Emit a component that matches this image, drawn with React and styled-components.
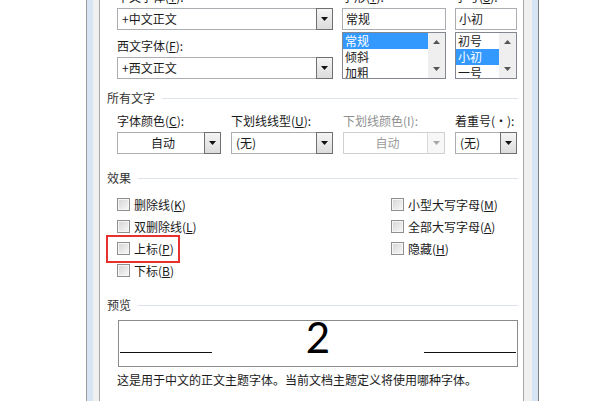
import React from "react";
import styled, { createGlobalStyle } from "styled-components";

const GlobalStyle = createGlobalStyle`
  html, body {
    margin: 0;
    padding: 0;
    background: #fff;
    overflow: hidden;
  }
  body {
    font-family: "Noto Sans CJK SC", "Noto Sans", sans-serif;
    font-size: 12px;
    color: #1a1a1a;
  }
`;

const Window = styled.div`
  margin-left: 86px;
  width: 453px;
  height: 401px;
  box-sizing: border-box;
  border-left: 1px solid #9c9c9c;
  border-right: 1px solid #7d7d7d;
  background: #d6e4f3;
  padding: 0 6px;
  display: flex;
`;

const Inner = styled.div`
  flex: 1;
  display: flex;
  background: #f0f0f0;
  padding: 0 8px 0 6px;
`;

const Panel = styled.div`
  flex: 1;
  background: #fff;
  border-left: 1px solid #a7a7a7;
  border-right: 1px solid #a7a7a7;
  padding: 0 5px 0 7px;
  overflow: hidden;
`;

const TopGrid = styled.div`
  display: grid;
  grid-template-columns: 216px 104px 62px;
  column-gap: 9px;
  margin: -11px 0 0 10px;
`;

const Column = styled.div`
  display: flex;
  flex-direction: column;
`;

const Label = styled.div`
  height: 16px;
  line-height: 16px;
  white-space: nowrap;
  margin-top: ${(p) => p.$top || 0}px;
  margin-bottom: 3px;
  color: ${(p) => (p.$disabled ? "#8f8f8f" : "#1a1a1a")};
`;

const Combo = styled.div`
  height: 22px;
  box-sizing: border-box;
  border: 1px solid ${(p) => (p.$disabled ? "#d0d0d0" : "#abadb3")};
  background: #fff;
  display: flex;
  align-items: stretch;
`;

const ComboText = styled.div`
  flex: 1;
  line-height: 20px;
  padding-left: 4px;
  text-align: ${(p) => (p.$center ? "center" : "left")};
  color: ${(p) => (p.$disabled ? "#9a9a9a" : "#1a1a1a")};
  white-space: nowrap;
`;

const DropButton = styled.div`
  width: 17px;
  margin: ${(p) => (p.$disabled ? "0" : "-1px -1px -1px 0")};
  box-sizing: border-box;
  border: ${(p) => (p.$disabled ? "none" : "1px solid #707070")};
  border-left: 1px solid ${(p) => (p.$disabled ? "#dadada" : "#707070")};
  background: ${(p) =>
    p.$disabled ? "#f7f7f7" : "linear-gradient(#f4f4f4, #dcdcdc)"};
  display: flex;
  align-items: center;
  justify-content: center;
`;

const TextBox = styled.div`
  height: 22px;
  box-sizing: border-box;
  border: 1px solid #abadb3;
  line-height: 20px;
  padding-left: 3px;
`;

const ListBox = styled.div`
  margin-top: 2px;
  height: 47px;
  box-sizing: border-box;
  border: 1px solid #828790;
  display: flex;
`;

const ListItems = styled.div`
  flex: 1;
  overflow: hidden;
`;

const ListItem = styled.div`
  height: 16px;
  line-height: 16px;
  padding-left: 2px;
  background: ${(p) => (p.$selected ? "#3399ff" : "transparent")};
  color: ${(p) => (p.$selected ? "#fff" : "#1a1a1a")};
  white-space: nowrap;
`;

const ScrollBar = styled.div`
  width: 17px;
  background: #efefef;
  display: flex;
  flex-direction: column;
  align-items: center;
  justify-content: space-between;
  padding: 7px 0 7px;
  box-sizing: border-box;
`;

const Heading = styled.div`
  display: flex;
  align-items: center;
  gap: 7px;
  height: 16px;
  line-height: 16px;
  color: #333;
  margin-top: ${(p) => p.$top}px;
  &::after {
    content: "";
    flex: 1;
    height: 1px;
    background: #dde4eb;
  }
`;

const FieldRow = styled.div`
  display: grid;
  grid-template-columns: 104px 102px 102px 62px;
  column-gap: 10px;
  margin: 7px 0 0 10px;
`;

const Effects = styled.div`
  display: grid;
  grid-template-columns: 274px 1fr;
  grid-template-rows: repeat(4, 22px);
  grid-auto-flow: column;
  margin: 7px 0 0 10px;
`;

const CheckRow = styled.div`
  position: relative;
  display: flex;
  align-items: center;
  gap: 4px;
  white-space: nowrap;
`;

const CheckBox = styled.span`
  width: 13px;
  height: 13px;
  box-sizing: border-box;
  border: 1px solid #8e8f8f;
  background: linear-gradient(135deg, #d4d4d4, #f9f9f9);
  box-shadow: inset 0 0 0 1px #f6f6f6;
`;

const Highlight = styled.div`
  position: absolute;
  left: -11px;
  top: -2px;
  width: 74px;
  height: 28px;
  box-sizing: border-box;
  border: 2px solid #e8302f;
`;

const Preview = styled.div`
  margin: 7px 0 0 11px;
  height: 47px;
  box-sizing: border-box;
  border: 1px solid #8c8c8c;
  display: flex;
  align-items: baseline;
  justify-content: space-between;
  padding: 0 1px;
`;

const PreviewLine = styled.div`
  width: 92px;
  height: 1px;
  background: #111;
`;

const Digit = styled.span`
  font-family: Lato, "Liberation Sans", sans-serif;
  font-size: 42px;
  line-height: 33.5px;
  color: #000;
`;

const Caption = styled.div`
  margin: 5px 0 0 10px;
  line-height: 16px;
  white-space: nowrap;
`;

const Arrow = ({ up, color = "#111" }) => (
  <svg width="7" height="4" viewBox="0 0 7 4">
    <polygon points={up ? "0,4 7,4 3.5,0" : "0,0 7,0 3.5,4"} fill={color} />
  </svg>
);

const Select = ({ text, center, disabled }) => (
  <Combo $disabled={disabled}>
    <ComboText $center={center} $disabled={disabled}>
      {text}
    </ComboText>
    <DropButton $disabled={disabled}>
      <Arrow color={disabled ? "#a8a8a8" : "#111"} />
    </DropButton>
  </Combo>
);

const List = ({ items, selected }) => (
  <ListBox>
    <ListItems>
      {items.map((it) => (
        <ListItem key={it} $selected={it === selected}>
          {it}
        </ListItem>
      ))}
    </ListItems>
    <ScrollBar>
      <Arrow up color="#555" />
      <Arrow color="#555" />
    </ScrollBar>
  </ListBox>
);

const Check = ({ children, highlight }) => (
  <CheckRow>
    {highlight && <Highlight />}
    <CheckBox />
    <span>{children}</span>
  </CheckRow>
);

const App = () => {
  return (
    <>
      <GlobalStyle />
      <Window>
        <Inner>
          <Panel>
            <TopGrid>
              <Column>
                <Label>
                  中文字体(<u>T</u>):
                </Label>
                <Select text="+中文正文" />
                <Label $top={8}>
                  西文字体(<u>F</u>):
                </Label>
                <Select text="+西文正文" />
              </Column>
              <Column>
                <Label>
                  字形(<u>Y</u>):
                </Label>
                <TextBox>常规</TextBox>
                <List items={["常规", "倾斜", "加粗"]} selected="常规" />
              </Column>
              <Column>
                <Label>
                  字号(<u>S</u>):
                </Label>
                <TextBox>小初</TextBox>
                <List items={["初号", "小初", "一号"]} selected="小初" />
              </Column>
            </TopGrid>

            <Heading $top={11}>所有文字</Heading>
            <FieldRow>
              <Column>
                <Label>
                  字体颜色(<u>C</u>):
                </Label>
                <Select text="自动" center />
              </Column>
              <Column>
                <Label>
                  下划线线型(<u>U</u>):
                </Label>
                <Select text="(无)" />
              </Column>
              <Column>
                <Label $disabled>下划线颜色(I):</Label>
                <Select text="自动" center disabled />
              </Column>
              <Column>
                <Label>着重号(·):</Label>
                <Select text="(无)" />
              </Column>
            </FieldRow>

            <Heading $top={16}>效果</Heading>
            <Effects>
              <Check>
                删除线(<u>K</u>)
              </Check>
              <Check>
                双删除线(<u>L</u>)
              </Check>
              <Check highlight>
                上标(<u>P</u>)
              </Check>
              <Check>
                下标(<u>B</u>)
              </Check>
              <Check>
                小型大写字母(<u>M</u>)
              </Check>
              <Check>
                全部大写字母(<u>A</u>)
              </Check>
              <Check>
                隐藏(<u>H</u>)
              </Check>
            </Effects>

            <Heading $top={16}>预览</Heading>
            <Preview>
              <PreviewLine />
              <Digit>2</Digit>
              <PreviewLine />
            </Preview>
            <Caption>这是用于中文的正文主题字体。当前文档主题定义将使用哪种字体。</Caption>
          </Panel>
        </Inner>
      </Window>
    </>
  );
};

export default App;
